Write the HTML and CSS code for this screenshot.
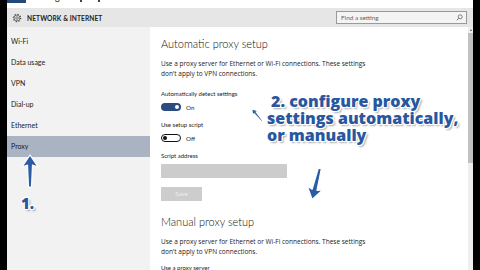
FILE: index.html
```html
<!DOCTYPE html>
<html lang="en">
<head>
    <meta charset="UTF-8">
    <meta name="viewport" content="width=device-width, initial-scale=1.0">
    <title>Settings - Proxy</title>
    <link rel="stylesheet" href="styles.css">
</head>
<body>
    <div class="screen">
        <div class="app">
            <div class="titlebar">
                <span class="back-btn"></span>
                <span class="title">Settings</span>
                <span class="win-ctl"></span>
                <span class="win-ctl"></span>
            </div>

            <div class="header">
                <svg class="gear" viewBox="0 0 12 12">
                    <circle cx="6" cy="6" r="4.4" fill="none" stroke="#444" stroke-width="1.5" stroke-dasharray="1.4 2.05"/>
                    <circle cx="6" cy="6" r="3.5" fill="none" stroke="#444" stroke-width="0.8"/>
                    <circle cx="6" cy="6" r="1.5" fill="none" stroke="#444" stroke-width="0.8"/>
                </svg>
                <span class="section-name">NETWORK &amp; INTERNET</span>
                <div class="search">
                    <span>Find a setting</span>
                    <svg class="search-icon" viewBox="0 0 8 8">
                        <circle cx="4.8" cy="3.2" r="2.3" fill="none" stroke="#555" stroke-width="0.8"/>
                        <line x1="3.1" y1="4.9" x2="0.8" y2="7.2" stroke="#555" stroke-width="0.9"/>
                    </svg>
                </div>
            </div>

            <div class="main">
                <nav class="sidebar">
                    <div class="nav-item">Wi-Fi</div>
                    <div class="nav-item">Data usage</div>
                    <div class="nav-item">VPN</div>
                    <div class="nav-item">Dial-up</div>
                    <div class="nav-item">Ethernet</div>
                    <div class="nav-item active">Proxy</div>
                </nav>

                <section class="content">
                    <h2 class="group-title">Automatic proxy setup</h2>
                    <p class="desc">Use a proxy server for Ethernet or Wi-Fi connections. These settings<br>don't apply to VPN connections.</p>

                    <div class="label first">Automatically detect settings</div>
                    <div class="toggle-row">
                        <span class="toggle on"><span class="knob"></span></span>
                        <span>On</span>
                    </div>

                    <div class="label">Use setup script</div>
                    <div class="toggle-row">
                        <span class="toggle off"><span class="knob"></span></span>
                        <span>Off</span>
                    </div>

                    <div class="label">Script address</div>
                    <div class="text-box"></div>
                    <div class="save-btn">Save</div>

                    <h2 class="group-title second">Manual proxy setup</h2>
                    <p class="desc">Use a proxy server for Ethernet or Wi-Fi connections. These settings<br>don't apply to VPN connections.</p>
                    <div class="label cut">Use a proxy server</div>
                </section>

                <div class="scrollbar">
                    <span class="scroll-arrow"></span>
                    <div class="thumb"></div>
                </div>
            </div>
        </div>

        <!-- annotations drawn over the screenshot -->
        <div class="note note-two">
            <div class="indent">2. configure proxy</div>
            <div>settings automatically,</div>
            <div>or manually</div>
        </div>
        <div class="note note-one">1.</div>

        <svg class="arrow arrow-up" width="20" height="38">
            <g transform="translate(10,19)">
                <polygon class="arrow-shape" points="0,-16 8,-4 2.5,-6 1.5,16 -1.5,16 -2.5,-6 -8,-4"/>
            </g>
        </svg>
        <svg class="arrow arrow-small" width="20" height="20">
            <g transform="translate(10,10) rotate(-40) scale(0.5)">
                <polygon class="arrow-shape thick" points="0,-16 8,-4 2.5,-6 1.5,16 -1.5,16 -2.5,-6 -8,-4"/>
            </g>
        </svg>
        <svg class="arrow arrow-down" width="36" height="38">
            <g transform="translate(18,19) rotate(194)">
                <polygon class="arrow-shape" points="0,-16 8,-4 2.5,-6 1.5,16 -1.5,16 -2.5,-6 -8,-4"/>
            </g>
        </svg>
    </div>
</body>
</html>
```

FILE: styles.css
```css
* {
    margin: 0;
    padding: 0;
    box-sizing: border-box;
}

body {
    font-family: Lato, "Noto Sans", sans-serif;
    background: #000;
    width: 480px;
    height: 270px;
    overflow: hidden;
    color: #111;
}

.screen {
    position: relative;
    width: 480px;
    height: 270px;
    padding-left: 7px;
}

.app {
    width: 466px;
    height: 270px;
    background: #fff;
    display: flex;
    flex-direction: column;
    overflow: hidden;
}

/* title bar, mostly cut off at the top */
.titlebar {
    height: 8px;
    display: flex;
    align-items: flex-start;
    overflow: hidden;
    background: #fff;
}

.back-btn {
    width: 19px;
    height: 3px;
    background: #24487c;
}

.title {
    font-size: 9px;
    line-height: 9px;
    margin-top: -8px;
    margin-left: 6px;
    color: #222;
}

.win-ctl {
    width: 2px;
    height: 2px;
    background: #444;
    margin-left: 16px;
}

.win-ctl:first-of-type {
    margin-left: auto;
}

.titlebar .win-ctl:last-child {
    margin-right: 12px;
}

.header {
    height: 19px;
    background: #e6e6e6;
    display: flex;
    align-items: center;
    padding-left: 5px;
}

.gear {
    width: 10px;
    height: 10px;
}

.section-name {
    font-size: 6.6px;
    font-weight: 700;
    letter-spacing: 0.1px;
    margin-left: 5px;
    color: #222;
}

.search {
    margin-left: auto;
    margin-right: 6px;
    width: 131px;
    height: 13px;
    border: 1px solid #9a9a9a;
    background: #f4f4f4;
    display: flex;
    align-items: center;
    justify-content: space-between;
    padding: 0 3px 0 4px;
    font-size: 6.4px;
    color: #666;
}

.search-icon {
    width: 7px;
    height: 7px;
}

.main {
    flex: 1;
    display: flex;
    min-height: 0;
}

.sidebar {
    width: 143px;
    background: #f2f2f2;
    padding-top: 4px;
}

.nav-item {
    height: 21px;
    line-height: 21px;
    padding-left: 4px;
    font-size: 7px;
    color: #1a1a1a;
}

.nav-item.active {
    background: #a9b3c2;
}

.content {
    flex: 1;
    padding: 10px 0 0 11px;
    overflow: hidden;
}

.group-title {
    font-size: 11px;
    font-weight: 300;
    line-height: 14px;
    color: #111;
}

.group-title.second {
    margin-top: 14px;
}

.desc {
    font-family: "Open Sans", Lato, sans-serif;
    font-size: 6.5px;
    line-height: 10px;
    margin-top: 8px;
    color: #222;
}

.label {
    font-size: 6px;
    line-height: 10px;
    margin-top: 9px;
    color: #222;
}

.label.first {
    margin-top: 10px;
}

.label.cut {
    margin-top: 6px;
}

.toggle-row {
    display: flex;
    align-items: center;
    gap: 5px;
    margin-top: 4px;
    font-size: 6.2px;
    color: #222;
}

.toggle {
    width: 20px;
    height: 8px;
    border-radius: 4px;
    display: flex;
    align-items: center;
    padding: 0 2px;
}

.toggle .knob {
    width: 4px;
    height: 4px;
    border-radius: 50%;
}

.toggle.on {
    background: #2b4c7e;
    justify-content: flex-end;
}

.toggle.on .knob {
    background: #fff;
}

.toggle.off {
    border: 1px solid #111;
    background: #fff;
    padding: 0 1px;
}

.toggle.off .knob {
    background: #111;
}

.text-box {
    width: 126px;
    height: 14px;
    margin-top: 3px;
    background: #cccccc;
}

.save-btn {
    width: 41px;
    height: 14px;
    margin-top: 9px;
    background: #cdcdcd;
    color: #eee;
    font-size: 6.2px;
    text-align: center;
    line-height: 14px;
}

.scrollbar {
    width: 5px;
    background: #efefef;
    display: flex;
    flex-direction: column;
    align-items: center;
    padding-top: 2px;
}

.scroll-arrow {
    width: 0;
    height: 0;
    border-left: 1.5px solid transparent;
    border-right: 1.5px solid transparent;
    border-bottom: 2px solid #555;
}

.thumb {
    width: 5px;
    height: 130px;
    margin-top: 2px;
    background: #c1c1c1;
}

/* annotations */
.note {
    position: absolute;
    font-family: "Open Sans", "Noto Sans", sans-serif;
    font-weight: 800;
    color: #2857a0;
    text-shadow:
        -1px 0 0 #fff, 1px 0 0 #fff, 0 -1px 0 #fff, 0 1px 0 #fff,
        1px 1px 0 #fff, -1px -1px 0 #fff, 1px -1px 0 #fff, -1px 1px 0 #fff,
        2px 2px 2px rgba(0, 0, 0, 0.35);
}

.note-two {
    left: 267px;
    top: 93px;
    font-size: 16px;
    line-height: 17px;
}

.note-two .indent {
    padding-left: 4px;
}

.note-one {
    left: 21px;
    top: 194px;
    font-size: 15px;
    line-height: 18px;
}

.arrow {
    position: absolute;
    overflow: visible;
}

.arrow-shape {
    fill: #2a5ba6;
    stroke: #fff;
    stroke-width: 1.2;
    stroke-linejoin: round;
}

.arrow-shape.thick {
    stroke-width: 2.2;
}

.arrow-up {
    left: 20px;
    top: 152px;
}

.arrow-small {
    left: 247px;
    top: 105px;
}

.arrow-down {
    left: 298px;
    top: 165px;
}
```
